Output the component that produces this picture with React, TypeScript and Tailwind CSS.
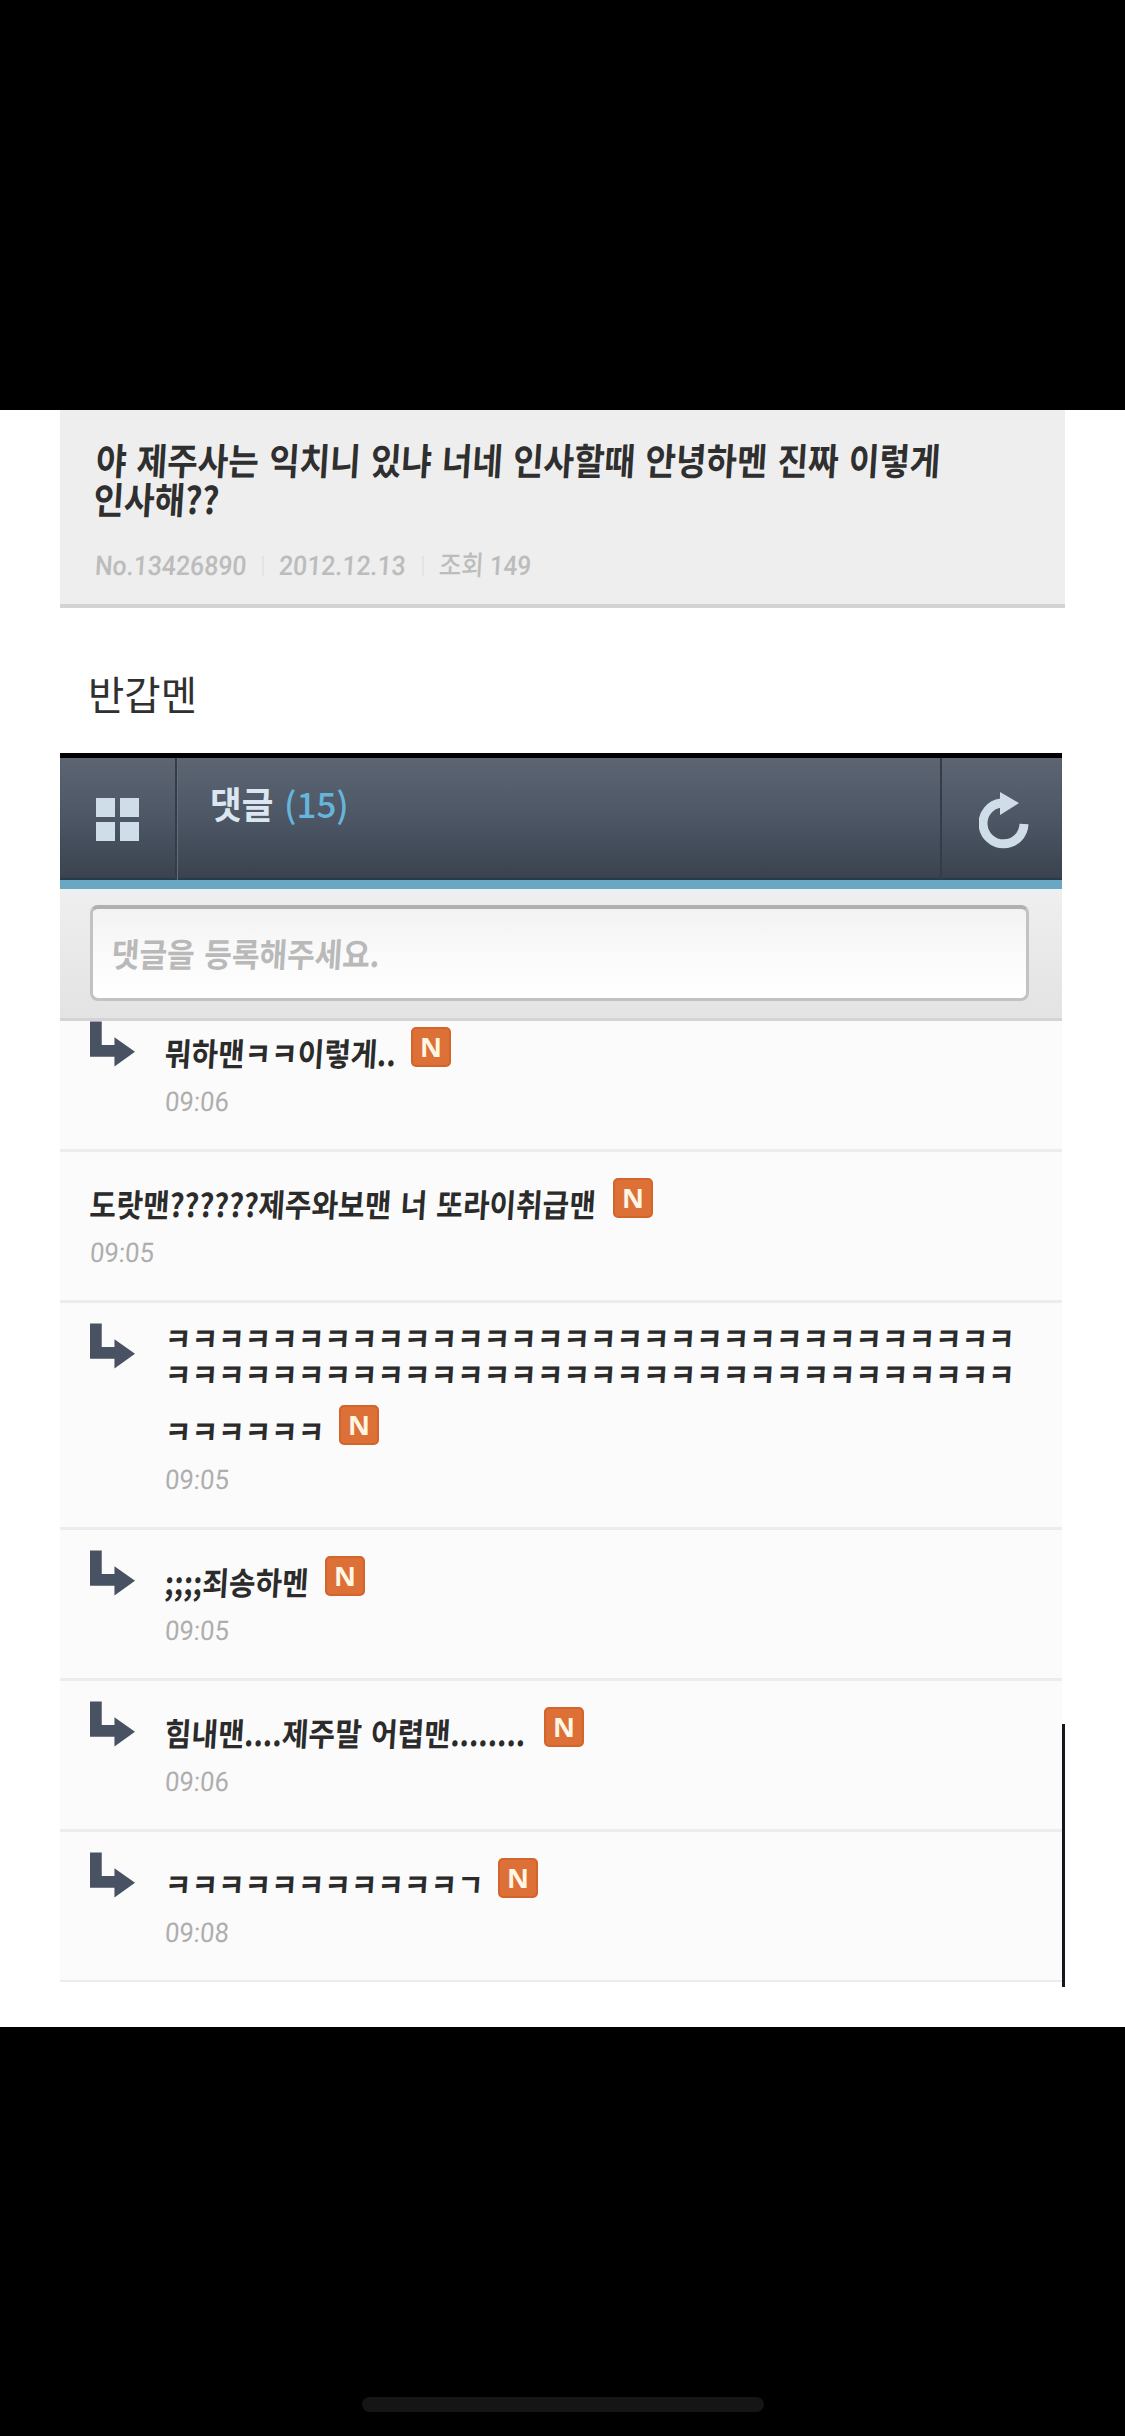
import React from "react";

type Comment = {
  lines: string[];
  time: string;
  reply: boolean;
  textWidth: string;
};

const laugh = "ㅋ".repeat(32);

const comments: Comment[] = [
  { lines: ["뭐하맨ㅋㅋ이렇게.."], time: "09:06", reply: true, textWidth: "w-[246px]" },
  { lines: ["도랏맨??????제주와보맨 너 또라이취급맨"], time: "09:05", reply: false, textWidth: "w-[523px]" },
  { lines: [laugh, laugh, "ㅋㅋㅋㅋㅋㅋ"], time: "09:05", reply: true, textWidth: "w-[174px]" },
  { lines: [";;;;죄송하멘"], time: "09:05", reply: true, textWidth: "w-[160px]" },
  { lines: ["힘내맨....제주말 어렵맨........"], time: "09:06", reply: true, textWidth: "w-[379px]" },
  { lines: ["ㅋㅋㅋㅋㅋㅋㅋㅋㅋㅋㅋㄱ"], time: "09:08", reply: true, textWidth: "w-[333px]" },
];

const textStyle =
  "block origin-left scale-x-[0.902] -skew-x-4 whitespace-nowrap text-[32px] font-bold text-[#2b2b2b] [word-spacing:3px]";

function ReplyArrow() {
  return (
    <svg viewBox="0 0 46 46" className="h-[46px] w-[45px] fill-[#485262]">
      <path d="M0 0H12V24H25V16L46 31L25 46V36H0Z" />
    </svg>
  );
}

function NewBadge() {
  return (
    <span className="flex h-10 w-10 shrink-0 items-center justify-center rounded-[5px] border-2 border-[#d2652c] bg-[#dc7036] pb-px font-['Open_Sans',sans-serif] text-[27px] leading-none font-bold text-[#fff6e4]">
      N
    </span>
  );
}

function CommentRow({ comment }: { comment: Comment }) {
  const head = comment.lines.slice(0, -1);
  const last = comment.lines[comment.lines.length - 1];
  return (
    <li
      className={
        "flex border-b-[3px] border-[#ececec] pl-[30px] " +
        (head.length > 0 ? "h-[227px]" : "h-[151px]")
      }
    >
      {comment.reply && (
        <div className="w-[75px] shrink-0 pt-5">
          <ReplyArrow />
        </div>
      )}
      <div className={head.length > 0 ? "pt-[16px]" : "pt-[26px]"}>
        {head.map((line, i) => (
          <p key={i} className={textStyle + " h-[36px] leading-[36px]"}>
            {line}
          </p>
        ))}
        <div className={"flex items-start " + (head.length > 0 ? "mt-[14px]" : "")}>
          <p className={comment.textWidth}>
            <span className={textStyle + " leading-[50px]"}>{last}</span>
          </p>
          <NewBadge />
        </div>
        <p className="origin-left scale-x-[0.95] -skew-x-4 font-[Roboto,sans-serif] text-[27px] leading-[51px] text-[#aeaeae]">
          {comment.time}
        </p>
      </div>
    </li>
  );
}

export default function App() {
  return (
    <div className="flex h-[2436px] w-[1125px] flex-col bg-black font-['Noto_Sans_CJK_KR',sans-serif]">
      <main className="mt-[410px] h-[1617px] bg-white pl-[60px]">
        <header className="h-[198px] w-[1005px] border-b-4 border-[#d3d3d3] bg-[#eeeeee] pt-[30px] pl-[35px]">
          <h1 className="origin-left scale-x-[0.896] -skew-x-4 text-[37px] leading-[39px] font-bold whitespace-nowrap text-[#2f2f2f] [word-spacing:3px]">
            야 제주사는 익치니 있냐 너네 인사할때 안녕하멘 진짜 이렇게
            <br />
            인사해??
          </h1>
          <div className="mt-[28px] flex h-10 items-center font-[Roboto,'Noto_Sans_CJK_KR',sans-serif] text-[27px] leading-10 font-medium whitespace-nowrap text-[#bcbcbc]">
            <span className="w-[167px] origin-left scale-x-[0.92] -skew-x-4">No.13426890</span>
            <span className="h-5 w-[2px] bg-[#e4e4e4]" />
            <span className="ml-[15px] w-[143px] origin-left scale-x-[0.92] -skew-x-4">2012.12.13</span>
            <span className="h-5 w-[2px] bg-[#e4e4e4]" />
            <span className="ml-[15px] origin-left scale-x-[0.9] -skew-x-4">조회 149</span>
          </div>
        </header>

        <p className="h-[145px] pt-[61px] pl-7 text-[39.5px] leading-[48px] text-[#303030]">반갑멘</p>

        <nav className="flex h-[136px] w-[1002px] border-t-[5px] border-b-[9px] border-t-black border-b-[#69a7c3] bg-linear-to-b from-[#5d6573] via-[#4c5664] to-[#3a424f] shadow-[inset_0_-2px_1px_#243c4b]">
          <div className="flex w-[117px] items-center justify-center border-r-2 border-[#353c48]">
            <div className="grid grid-cols-2 gap-[5px]">
              <span className="h-[19px] w-[19px] bg-[#cfdde8]" />
              <span className="h-[19px] w-[19px] bg-[#cfdde8]" />
              <span className="h-[19px] w-[19px] bg-[#cfdde8]" />
              <span className="h-[19px] w-[19px] bg-[#cfdde8]" />
            </div>
          </div>
          <h2 className="flex flex-1 border-l border-[#656d7a] pt-[18px] pl-[32px] text-[37px] leading-[54px] font-bold whitespace-nowrap text-[#dce6f1]">
            <span className="w-[74px] origin-left scale-x-[0.93]">댓글</span>
            <span className="text-[35px] font-medium text-[#65b5dc]">(15)</span>
          </h2>
          <div className="flex w-[122px] border-l-2 border-[#353c48] pt-[33px] pl-[37px]">
            <svg viewBox="0 0 50 58" className="h-[58px] w-[50px]">
              <path
                d="M22 12A20.5 20.5 0 1 0 45 33"
                fill="none"
                stroke="#cfdde8"
                strokeWidth="9"
              />
              <path d="M21 1L40 12L21 24Z" fill="#cfdde8" />
            </svg>
          </div>
        </nav>

        <section className="h-[132px] w-[1002px] border-b-[3px] border-[#d4d4d4] bg-linear-to-b from-[#efefef] to-[#e3e3e3] pt-4 pl-[30px]">
          <div className="h-[96px] w-[939px] rounded-lg border-[3px] border-t-4 border-[#c2c2c2] border-t-[#b0b0b0] bg-linear-to-b from-[#f3f3f3] via-[#fafafa] to-white pl-[19px]">
            <p className="origin-left scale-x-[0.91] -skew-x-4 text-[33px] leading-[88px] font-bold whitespace-nowrap text-[#b9b9b9] [word-spacing:3px]">
              댓글을 등록해주세요.
            </p>
          </div>
        </section>

        <div className="flex h-[968px]">
          <div className="h-[961px] w-[1002px] shrink-0 overflow-hidden bg-[#fbfbfb]">
            <ul className="-mt-[20px]">
              {comments.map((comment, i) => (
                <CommentRow key={i} comment={comment} />
              ))}
            </ul>
          </div>
          <div className="mt-[703px] h-[263px] w-[3px] bg-[#15171c]" />
        </div>
      </main>

      <div className="mt-[370px] ml-[362px] h-[15px] w-[402px] rounded-full bg-[#151515]" />
    </div>
  );
}
